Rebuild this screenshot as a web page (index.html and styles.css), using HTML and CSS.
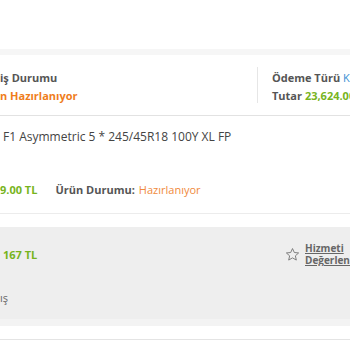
FILE: index.html
```html
<!DOCTYPE html>
<html lang="tr">
<head>
<meta charset="UTF-8">
<meta name="viewport" content="width=device-width, initial-scale=1.0">
<title>Sipariş Detayı</title>
<link rel="stylesheet" href="styles.css">
</head>
<body>

<div class="page">
  <div class="top-space"></div>
  <div class="band"></div>

  <div class="order-head">
    <div class="head-left">
      <div class="label">iş Durumu</div>
      <div class="status">n Hazırlanıyor</div>
    </div>
    <div class="head-right">
      <div class="label">Ödeme Türü <span class="pay">Kredi Kartı</span></div>
      <div class="label">Tutar <span class="price">23,624.00 TL</span></div>
    </div>
  </div>

  <div class="product">
    <div class="product-name">F1 Asymmetric 5 * 245/45R18 100Y XL FP</div>
    <div class="product-meta">
      <span class="price">9.00 TL</span>
      <span class="label">Ürün Durumu:</span>
      <span class="state">Hazırlanıyor</span>
    </div>
  </div>

  <div class="service">
    <div class="service-row">
      <span class="price">167 TL</span>
      <a class="rate" href="#">
        <svg class="star" width="15" height="15" viewBox="0 0 24 24"><path d="M12 2.5l2.9 6.3 6.9.7-5.2 4.6 1.5 6.8L12 17.4l-6.1 3.5 1.5-6.8-5.2-4.6 6.9-.7z" fill="none" stroke="#777" stroke-width="1.5" stroke-linejoin="round"/></svg>
        <span class="rate-text">Hizmeti<br>Değerlendir</span>
      </a>
    </div>
    <div class="service-note">ış</div>
  </div>
  <div class="service-foot"></div>
  <div class="next-item"></div>
</div>

</body>
</html>
```

FILE: styles.css
```css
body {
  margin: 0;
  background-color: #fff;
  font-family: "Open Sans", Arial, sans-serif;
  color: #555;
  overflow: hidden;
}

.page {
  width: 350px;
  height: 350px;
  overflow: hidden;
}

.top-space {
  height: 49px;
}

.band {
  height: 6px;
  background-color: #f6f6f6;
}

.order-head {
  display: flex;
  height: 60px;
  border-bottom: 1px solid #e2e2e2;
  font-size: 11px;
  font-weight: 700;
}

.head-left {
  flex: 1;
  padding-top: 14px;
  line-height: 18px;
}

.head-right {
  flex-shrink: 0;
  width: 78px;
  margin-top: 12px;
  margin-bottom: 12px;
  padding-left: 14px;
  padding-top: 2px;
  border-left: 1px solid #e6e6e6;
  line-height: 18px;
  white-space: nowrap;
  overflow: hidden;
}

.label {
  color: #555;
  font-weight: 700;
}

.status {
  color: #ef7d1c;
}

.pay {
  color: #3b8fd3;
  font-weight: 400;
}

.price {
  color: #77b41d;
  font-weight: 700;
}

.product {
  padding: 13px 0 0 3px;
  height: 84px;
  border-bottom: 1px solid #ececec;
}

.product-name {
  font-size: 12px;
  color: #444;
  line-height: 16px;
}

.product-meta {
  display: flex;
  align-items: center;
  gap: 4px;
  margin-top: 37px;
  margin-left: -3px;
  font-size: 11px;
}

.product-meta .price {
  margin-right: 14px;
}

.state {
  color: #f08a3c;
}

.service {
  margin-top: 13px;
  height: 92px;
  background-color: #eeeeee;
}

.service-row {
  display: flex;
  justify-content: space-between;
  align-items: center;
  padding: 15px 0 0 3px;
  font-size: 11px;
}

.rate {
  display: flex;
  align-items: center;
  gap: 5px;
  width: 65px;
  color: #666;
  text-decoration: none;
  white-space: nowrap;
  overflow: hidden;
}

.star {
  flex-shrink: 0;
}

.rate-text {
  font-size: 10px;
  font-weight: 700;
  line-height: 12px;
  text-decoration: underline;
}

.service-note {
  margin-top: 24px;
  font-size: 11px;
  color: #666;
}

.service-foot {
  height: 7px;
  background-color: #f3f3f3;
}

.next-item {
  height: 13px;
  border-bottom: 1px solid #e4e4e4;
}
```
